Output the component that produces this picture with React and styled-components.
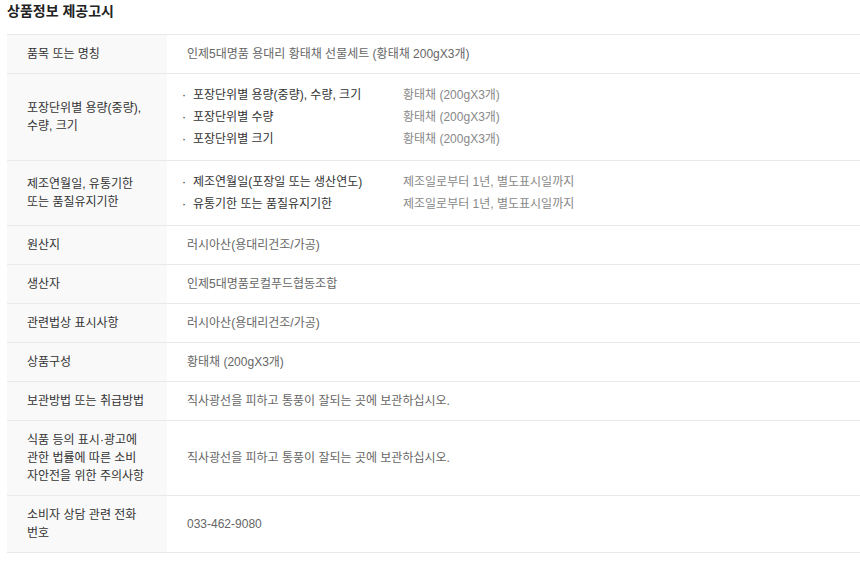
import React from "react";
import styled, { createGlobalStyle } from "styled-components";

const GlobalStyle = createGlobalStyle`
  html, body {
    margin: 0;
    padding: 0;
    background: #fff;
  }
  body {
    font-family: "Liberation Sans", "Noto Sans CJK KR", sans-serif;
  }
`;

const Page = styled.div`
  padding-left: 7px;
`;

const Title = styled.h2`
  margin: 0 0 12px;
  font-size: 14px;
  line-height: 22px;
  font-weight: 700;
  color: #222;
`;

const Table = styled.div`
  border-top: 1px solid #e9e9e9;
`;

const Row = styled.div`
  display: grid;
  grid-template-columns: 160px 1fr;
  border-bottom: 1px solid #e9e9e9;
`;

const Label = styled.div`
  background: #f9f9f9;
  padding: 10px 21px 10px 20px;
  display: flex;
  align-items: center;
  font-size: 12px;
  line-height: 18px;
  color: #333;
`;

const Value = styled.div`
  padding: 10px 20px;
  display: flex;
  align-items: center;
  font-size: 12px;
  line-height: 18px;
  color: #666;
`;

const List = styled.ul`
  list-style: none;
  margin: 0 0 0 -5px;
  padding: 0;
`;

const Item = styled.li`
  display: flex;
  line-height: 22px;
`;

const Bullet = styled.span`
  width: 11px;
  color: #333;
`;

const ItemName = styled.span`
  width: 210px;
  color: #333;
`;

const ItemValue = styled.span`
  color: #888;
`;

const rows = [
  { label: "품목 또는 명칭", value: "인제5대명품 용대리 황태채 선물세트 (황태채 200gX3개)" },
  {
    label: "포장단위별 용량(중량), 수량, 크기",
    items: [
      ["포장단위별 용량(중량), 수량, 크기", "황태채 (200gX3개)"],
      ["포장단위별 수량", "황태채 (200gX3개)"],
      ["포장단위별 크기", "황태채 (200gX3개)"],
    ],
  },
  {
    label: "제조연월일, 유통기한 또는 품질유지기한",
    items: [
      ["제조연월일(포장일 또는 생산연도)", "제조일로부터 1년, 별도표시일까지"],
      ["유통기한 또는 품질유지기한", "제조일로부터 1년, 별도표시일까지"],
    ],
  },
  { label: "원산지", value: "러시아산(용대리건조/가공)" },
  { label: "생산자", value: "인제5대명품로컬푸드협동조합" },
  { label: "관련법상 표시사항", value: "러시아산(용대리건조/가공)" },
  { label: "상품구성", value: "황태채 (200gX3개)" },
  { label: "보관방법 또는 취급방법", value: "직사광선을 피하고 통풍이 잘되는 곳에 보관하십시오." },
  {
    label: "식품 등의 표시·광고에 관한 법률에 따른 소비자안전을 위한 주의사항",
    value: "직사광선을 피하고 통풍이 잘되는 곳에 보관하십시오.",
  },
  { label: "소비자 상담 관련 전화번호", value: "033-462-9080" },
];

export default function App() {
  return (
    <Page>
      <GlobalStyle />
      <Title>상품정보 제공고시</Title>
      <Table>
        {rows.map((row) => (
          <Row key={row.label}>
            <Label>{row.label}</Label>
            <Value>
              {row.items ? (
                <List>
                  {row.items.map(([name, val]) => (
                    <Item key={name}>
                      <Bullet>·</Bullet>
                      <ItemName>{name}</ItemName>
                      <ItemValue>{val}</ItemValue>
                    </Item>
                  ))}
                </List>
              ) : (
                row.value
              )}
            </Value>
          </Row>
        ))}
      </Table>
    </Page>
  );
}
